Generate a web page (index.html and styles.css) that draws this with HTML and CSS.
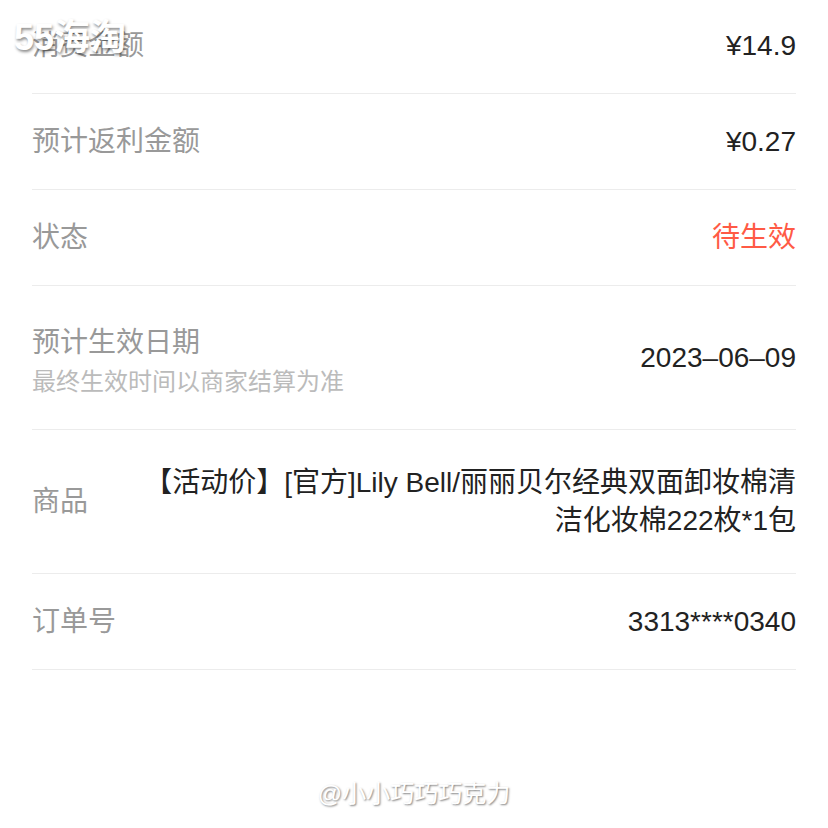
FILE: index.html
```html
<!DOCTYPE html>
<html lang="zh-CN">
<head>
    <meta charset="UTF-8">
    <meta name="viewport" content="width=device-width, initial-scale=1.0">
    <title>返利详情</title>
    <link rel="stylesheet" href="styles.css">
</head>
<body>
    <div class="page">
        <div class="list">
            <div class="row">
                <span class="label">消费金额</span>
                <span class="value">¥14.9</span>
            </div>
            <div class="row">
                <span class="label">预计返利金额</span>
                <span class="value">¥0.27</span>
            </div>
            <div class="row">
                <span class="label">状态</span>
                <span class="value red">待生效</span>
            </div>
            <div class="row tall">
                <div class="label-box">
                    <div class="label">预计生效日期</div>
                    <div class="sub">最终生效时间以商家结算为准</div>
                </div>
                <span class="value">2023–06–09</span>
            </div>
            <div class="row tall">
                <span class="label">商品</span>
                <span class="value goods">【活动价】[官方]Lily Bell/丽丽贝尔经典双面卸妆棉清洁化妆棉222枚*1包</span>
            </div>
            <div class="row">
                <span class="label">订单号</span>
                <span class="value">3313****0340</span>
            </div>
        </div>
        <div class="mark-top">55海淘</div>
        <div class="mark-bottom">@小小巧巧巧克力</div>
    </div>
</body>
</html>
```

FILE: styles.css
```css
body {
    margin: 0;
    padding: 0;
    background-color: #fff;
    font-family: "Liberation Sans", "Noto Sans CJK SC", sans-serif;
    color: #222;
}
.page {
    position: relative;
    width: 828px;
    height: 828px;
    overflow: hidden;
}
.list {
    margin-top: -2px;
    padding: 0 32px;
}
.row {
    display: flex;
    justify-content: space-between;
    align-items: center;
    height: 96px;
    box-sizing: border-box;
    border-bottom: 1px solid #ececec;
}
.row.tall {
    height: 144px;
}
.label-box {
    padding-top: 6px;
}
.label {
    font-size: 28px;
    line-height: 40px;
    color: #999;
    flex-shrink: 0;
}
.sub {
    font-size: 24px;
    line-height: 34px;
    margin-top: 2px;
    color: #bbb;
}
.value {
    font-size: 28px;
    line-height: 38px;
    color: #222;
    text-align: right;
}
.value.red {
    color: #ff5a45;
}
.value.goods {
    max-width: 668px;
}
.mark-top {
    position: absolute;
    left: 14px;
    top: 8px;
    font-size: 36px;
    font-weight: bold;
    color: #fff;
    text-shadow: 1px 2px 3px rgba(0, 0, 0, 0.45);
}
.mark-bottom {
    position: absolute;
    left: 0;
    right: 0;
    top: 774px;
    text-align: center;
    font-size: 24px;
    color: #fff;
    text-shadow: 1px 1px 2px rgba(0, 0, 0, 0.5);
}
```
